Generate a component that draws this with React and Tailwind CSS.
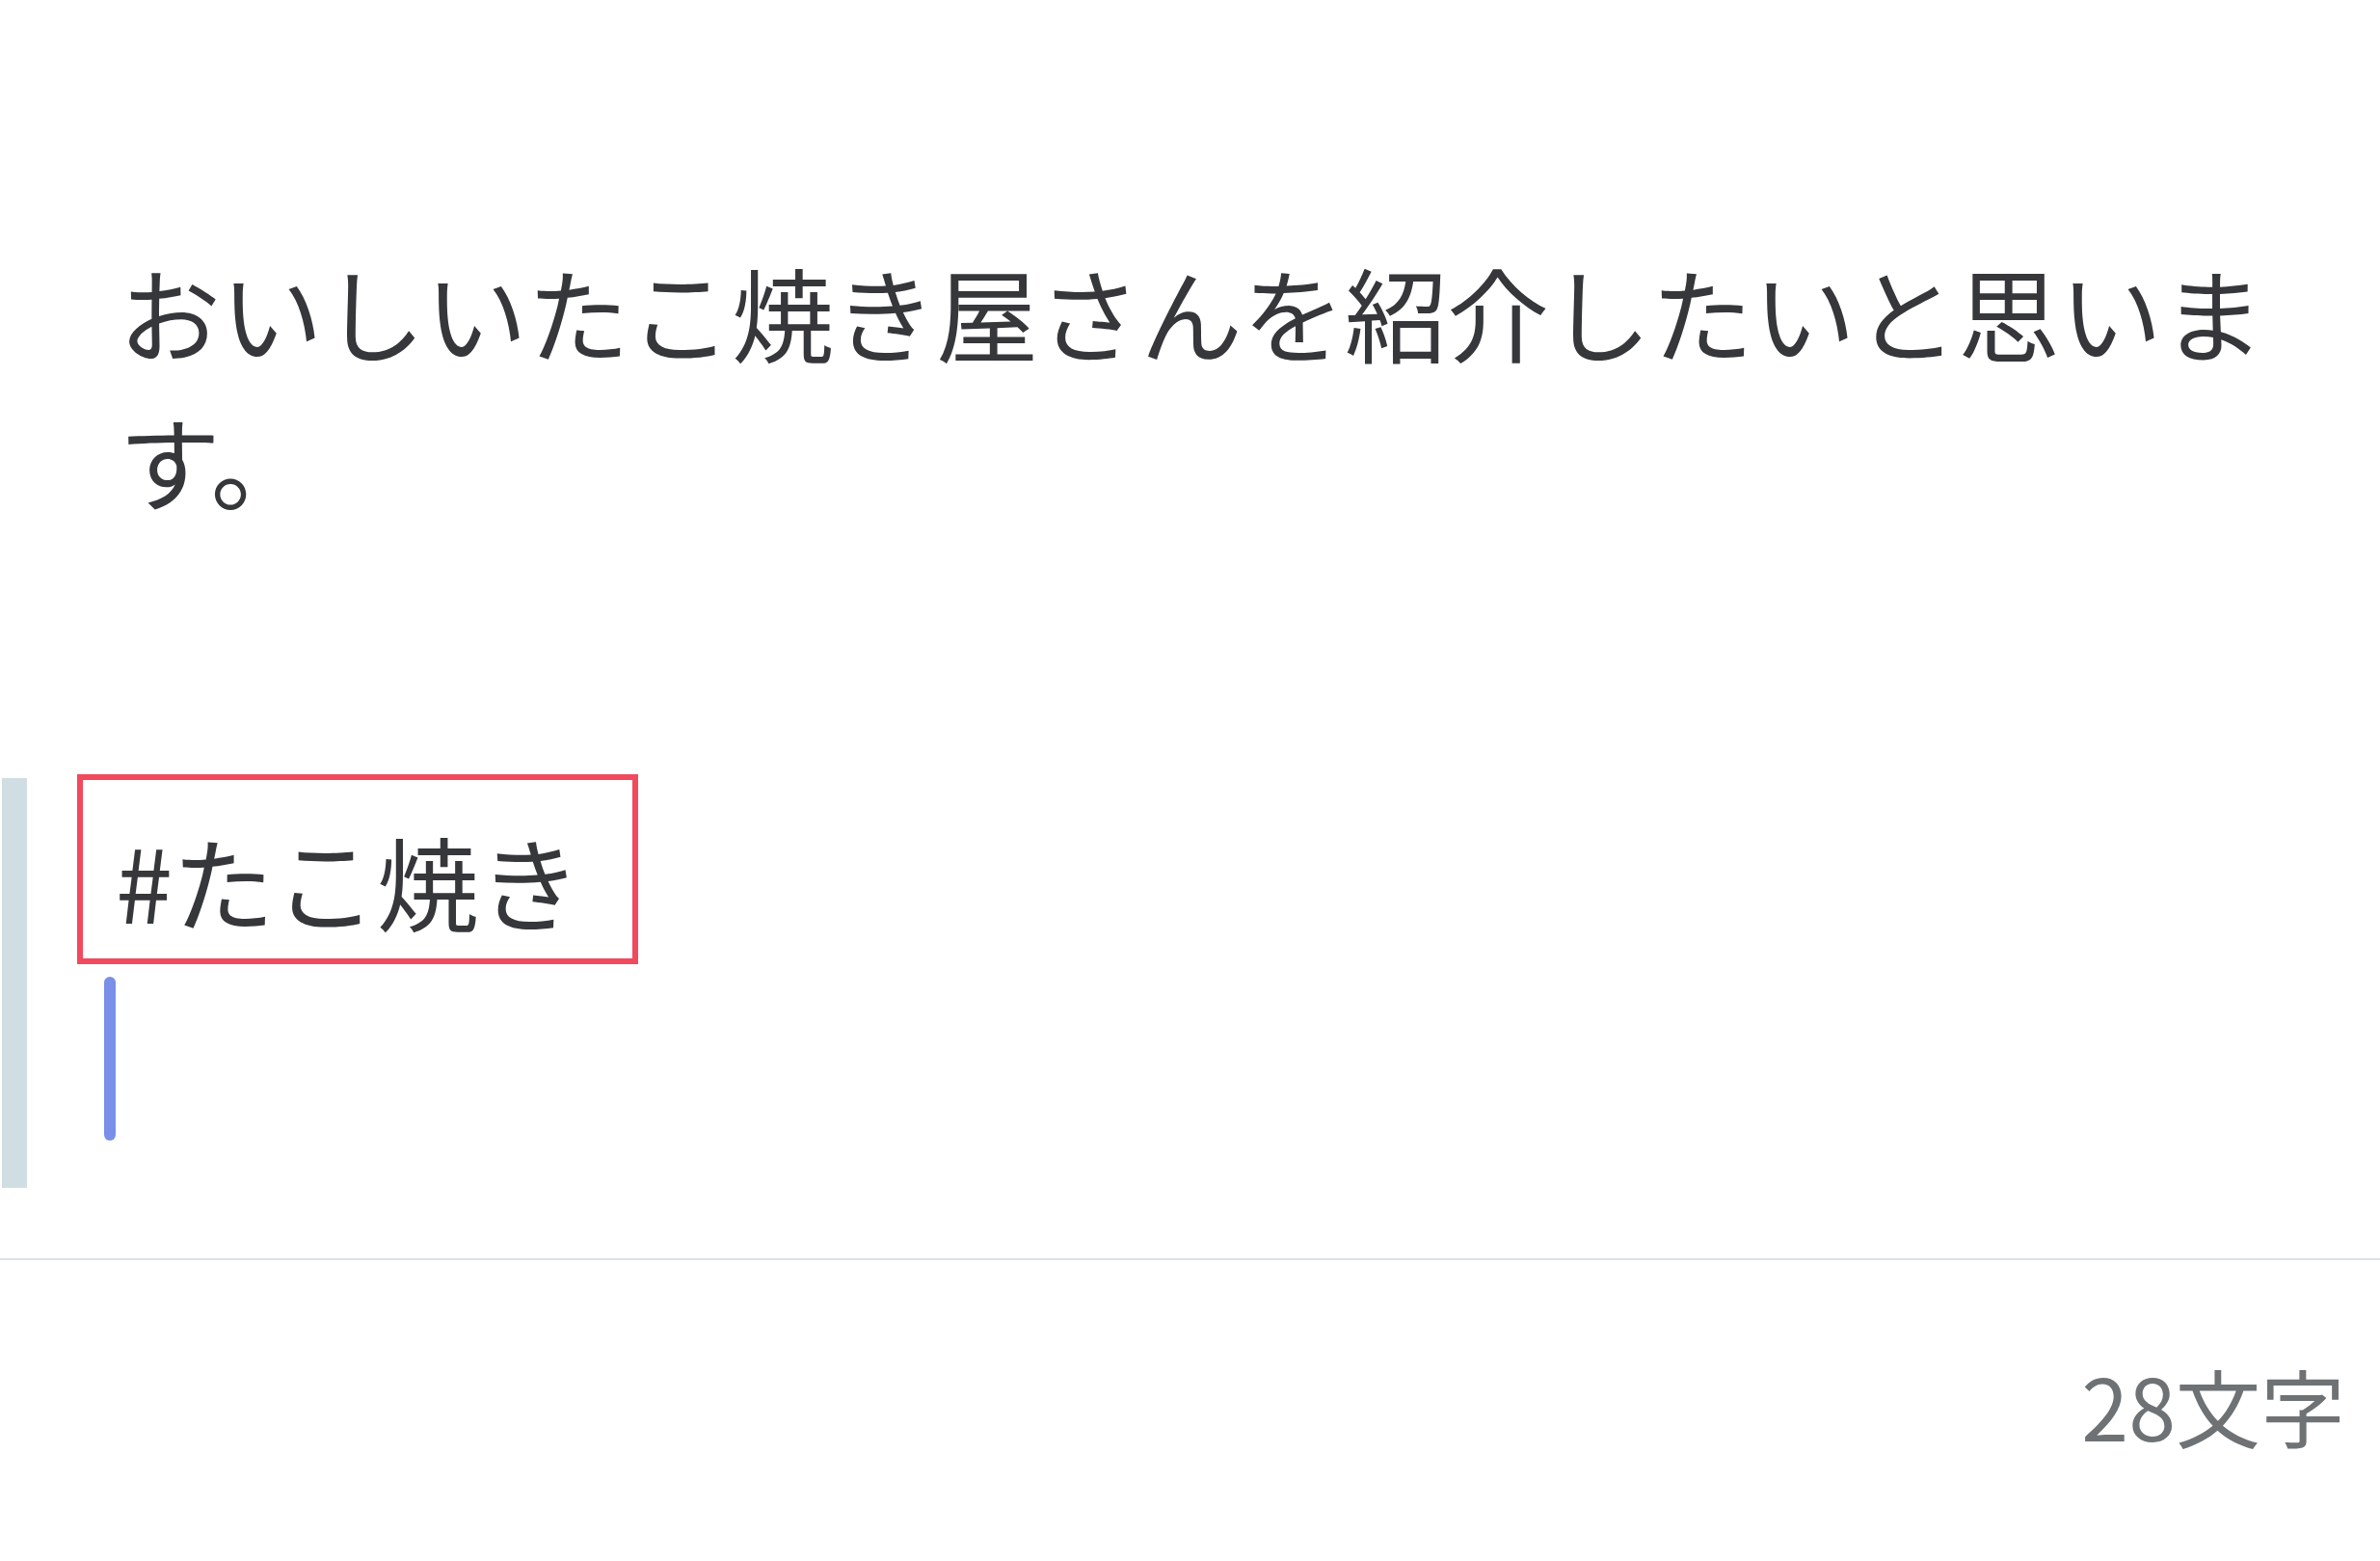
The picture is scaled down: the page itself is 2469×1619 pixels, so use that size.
export default function App() {
  const jp = { fontFamily: '"Noto Sans CJK JP", "Noto Sans", sans-serif' };
  return (
    <div className="w-full h-[1619px] bg-white flex flex-col overflow-hidden" style={jp}>
      <p className="pt-[245px] pl-[123px] pr-[100px] text-[106px] leading-[154px] text-[#35373b]">
        おいしいたこ焼き屋さんを紹介したいと思います。
      </p>
      <div className="mt-[254px] flex flex-row items-start">
        <div className="ml-[2px] w-[26px] h-[425px] bg-[#d0dee4]" />
        <div className="flex flex-col -mt-[4px] ml-[52px]">
          <div className="w-[582px] h-[197px] border-[6px] border-[#f24a5d] pl-[34px] pt-[26px]">
            <span className="block text-[106px] leading-[154px] text-[#35373b] whitespace-nowrap">#たこ焼き</span>
          </div>
          <div className="mt-[13px] ml-[28px] w-[12px] h-[170px] rounded-full bg-[#7a8fe8]" />
        </div>
      </div>
      <div className="mt-[73px] h-[2px] w-full bg-[#dee2e4]" />
      <div className="flex justify-end pr-[36px] pt-[100px]">
        <span className="text-[88px] leading-[100px] text-[#6e7275]">28文字</span>
      </div>
    </div>
  );
}
